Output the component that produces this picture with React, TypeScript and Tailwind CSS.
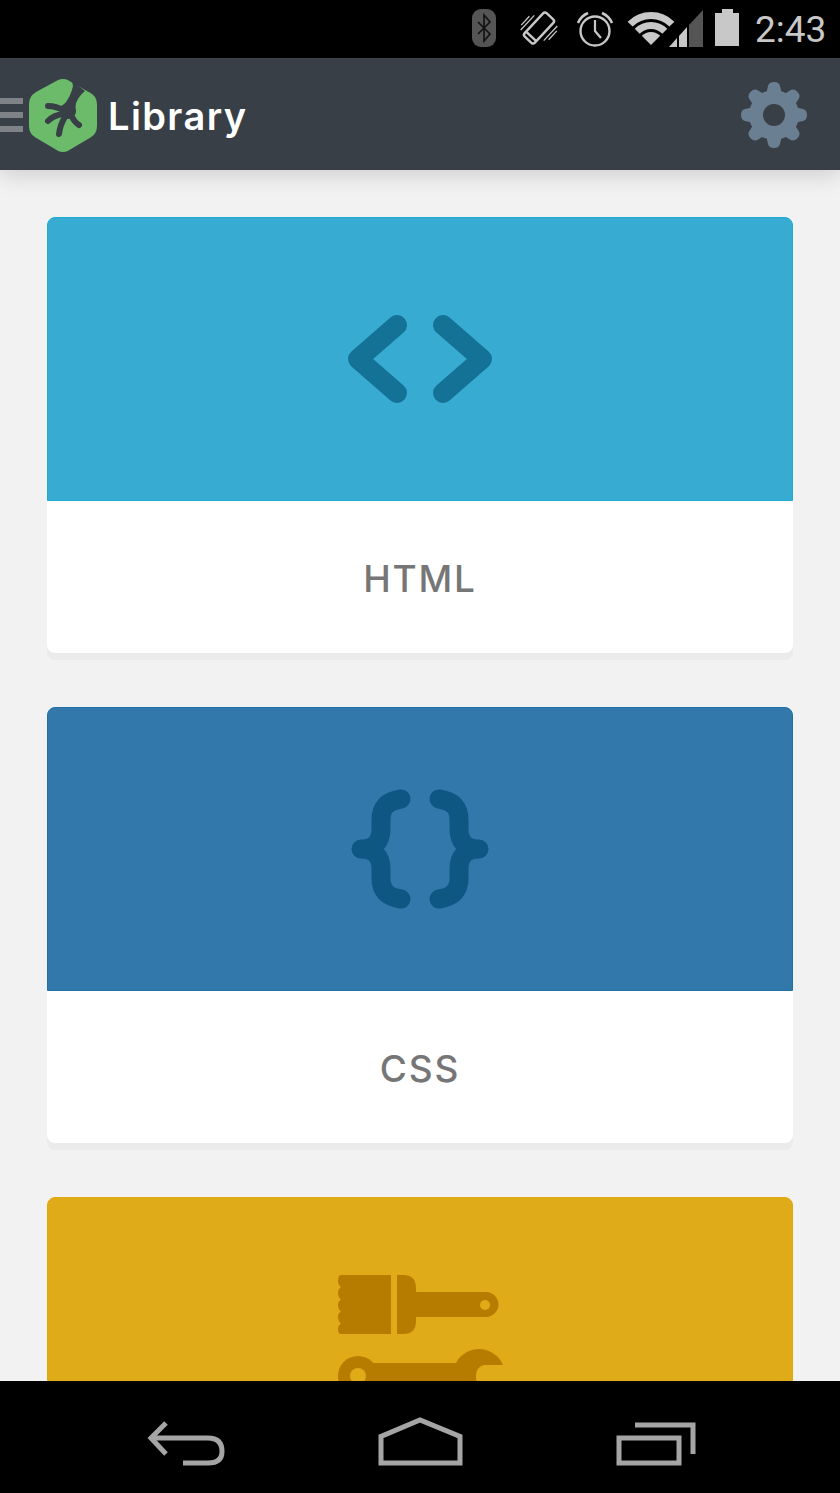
import type { ReactNode } from 'react';

function StatusIcons() {
  return (
    <svg width="280" height="58" viewBox="465 0 280 58" fill="none">
      {/* bluetooth */}
      <rect x="472" y="9" width="24" height="38" rx="9" fill="#555555" />
      <path d="M478 22 L490 34 L484 41 V15 L490 22 L478 34" stroke="#111111" strokeWidth="1.6" />
      {/* vibrate */}
      <g transform="rotate(43 539 28)" stroke="#c8c8c8">
        <rect x="532" y="12" width="14" height="32" rx="2.5" strokeWidth="2.4" />
        <path d="M532 39.5 H546" strokeWidth="2.5" />
        <path d="M527 22 V42 M524 26 V38 M551 14 V34 M554 18 V30" strokeWidth="1.3" />
      </g>
      {/* alarm */}
      <circle cx="595" cy="31" r="14.5" stroke="#c8c8c8" strokeWidth="2.4" />
      <path d="M595 20 V31 L601 38" stroke="#c8c8c8" strokeWidth="2.2" />
      <path d="M578 23 Q581 16 588 13 M612 23 Q609 16 602 13" stroke="#c8c8c8" strokeWidth="2.6" />
      {/* wifi */}
      <path d="M651 45 L641.8 35.8 A13 13 0 0 1 660.2 35.8 Z" fill="#c8c8c8" />
      <path d="M637.2 31.2 A19.5 19.5 0 0 1 664.8 31.2" stroke="#c8c8c8" strokeWidth="7" />
      <path d="M630.1 24.1 A29.5 29.5 0 0 1 671.9 24.1" stroke="#c8c8c8" strokeWidth="7" />
      {/* signal */}
      <polygon points="669,47 677,38 677,47" fill="#c8c8c8" />
      <polygon points="679,36 687,27 687,47 679,47" fill="#c8c8c8" />
      <polygon points="689,25 703,10 703,47 689,47" fill="#555555" />
      {/* battery */}
      <path d="M722 9 H733 V13 H739 V46 H715 V13 H722 Z" fill="#c8c8c8" />
    </svg>
  );
}

function Logo() {
  return (
    <svg width="72" height="84" viewBox="27 72 72 84" fill="none">
      <path d="M59 82 Q63 80 67 82 L88 94 Q94 97 94 103 V125 Q94 131 89 134 L67 147 Q63 149 59 147 L37 134 Q32 131 32 125 V103 Q32 97 37 94 Z" fill="#6bbb6b" stroke="#6bbb6b" strokeWidth="6" strokeLinejoin="round" />
      {/* foot */}
      <path d="M72 80 L73 85 Q71 96 62 106 L76 112 Q73 100 85 90 Z" fill="#383f47" />
      <circle cx="68" cy="110" r="8" fill="#383f47" />
      <g stroke="#383f47" strokeLinecap="round" strokeWidth="6">
        <path d="M65 110 Q56 105 48 105" />
        <path d="M63 113 Q54 114 48 120" />
        <path d="M65 116 Q60 124 59 133" />
        <path d="M71 113 Q73 120 79 124" />
      </g>
    </svg>
  );
}

function Gear() {
  const teeth = [0, 45, 90, 135, 180, 225, 270, 315];
  return (
    <svg width="70" height="70" viewBox="739 79 70 70">
      <circle cx="774" cy="114" r="25" fill="#6b7f93" />
      {teeth.map(a => (
        <path key={a} d="M764 103 L768 85 Q769 81 774 81 Q779 81 780 85 L784 103 Z" fill="#6b7f93" transform={`rotate(${a} 774 114)`} />
      ))}
      <circle cx="774" cy="114" r="11" fill="#383f47" />
    </svg>
  );
}

function CodeIcon() {
  return (
    <svg width="160" height="100" viewBox="340 309 160 100" fill="none" stroke="#147296" strokeWidth="20" strokeLinecap="round" strokeLinejoin="round">
      <path d="M397 325 L358 359 L397 393" />
      <path d="M443 325 L482 359 L443 393" />
    </svg>
  );
}

function BracesIcon() {
  return (
    <svg width="160" height="130" viewBox="340 784 160 130" fill="none" stroke="#0f5783" strokeWidth="19" strokeLinecap="round" strokeLinejoin="round">
      <path d="M401 799 C388 801 381 807 381 820 V829 C381 842 374 849 361 849 C374 849 381 856 381 869 V878 C381 891 388 897 401 899" />
      <path d="M439 799 C452 801 459 807 459 820 V829 C459 842 466 849 479 849 C466 849 459 856 459 869 V878 C459 891 452 897 439 899" />
    </svg>
  );
}

function ToolsIcon() {
  return (
    <svg width="180" height="140" viewBox="330 1269 180 140" className="shrink-0">
      <path d="M341 1275 H391 V1334 H341 Q338 1334 338 1329 Q338 1325 341 1323.5 Q338 1321 338 1317 Q338 1313 341 1311.5 Q338 1309 338 1305 Q338 1301 341 1299.5 Q338 1297 338 1293 Q338 1289 341 1287 Q338 1285 338 1281 Q338 1275 341 1275 Z" fill="#b67c00" />
      <path d="M397 1275 H403 Q416 1275 416 1288 V1292 H486 A12.5 12.5 0 0 1 486 1317 H416 V1321 Q416 1334 403 1334 H397 Z" fill="#b67c00" />
      <circle cx="485" cy="1305" r="5" fill="#dfab18" />
      <rect x="358" y="1363" width="120" height="26" fill="#b67c00" />
      <circle cx="358" cy="1376" r="20" fill="#b67c00" />
      <circle cx="358" cy="1376" r="8" fill="#dfab18" />
      <circle cx="479" cy="1375" r="26" fill="#b67c00" />
      <path d="M510 1365 H484 Q476 1367 476 1376 Q476 1385 484 1389 H510 Z" fill="#dfab18" />
    </svg>
  );
}

function NavIcons() {
  return (
    <svg width="570" height="112" viewBox="140 1381 570 112" fill="none" stroke="#a5a5a5" strokeWidth="5">
      <path d="M166 1423 L151 1438 L166 1454" />
      <path d="M151 1438 H208 Q222 1438 222 1451.500 Q222 1463 208 1463 H183" />
      <path d="M381 1463 V1436.500 L420 1420 L460 1436.500 V1463 Z" strokeLinejoin="miter" />
      <rect x="619" y="1438" width="60" height="25" />
      <path d="M635 1425 H693 V1454" />
    </svg>
  );
}

function Card({ title, top, border, icon, last }: { title: string; top: string; border: string; icon: ReactNode; last?: boolean }) {
  return (
    <div className={`w-[746px] shrink-0 rounded-lg bg-white shadow-[0_7px_0_#ebebeb] ${last ? '' : 'mb-[54px]'}`}>
      <div className={`h-[284px] rounded-t-lg border ${top} ${border} flex items-center justify-center overflow-hidden`}>
        {icon}
      </div>
      <div className="h-[152px] flex items-center justify-center pt-[3px] text-[37px] font-medium tracking-[1.8px] text-[#767676] [font-family:Inter,sans-serif]">
        {title}
      </div>
    </div>
  );
}

export default function App() {
  return (
    <div className="w-[840px] h-[1493px] flex flex-col overflow-hidden bg-black">
      {/* status bar */}
      <div className="h-[58px] shrink-0 flex items-center justify-end pr-[15px] gap-[10px] bg-black">
        <StatusIcons />
        <span className="w-[70px] text-right text-[37px] font-normal text-[#c8c8c8] leading-none [font-family:Roboto,sans-serif]">2:43</span>
      </div>

      {/* action bar */}
      <div className="relative z-10 h-[112px] shrink-0 flex items-center justify-between bg-[#383f47] pr-[31px] border-t border-[#3f464e] border-b-[#62676c] shadow-[0_4px_22px_rgba(0,0,0,0.16)]">
        <div className="flex items-center">
          <div className="w-[23px] flex flex-col gap-[8px]">
            <div className="h-[6px] bg-[#7f8387]" />
            <div className="h-[6px] bg-[#7f8387]" />
            <div className="h-[6px] bg-[#7f8387]" />
          </div>
          <div className="ml-[4px]"><Logo /></div>
          <span className="ml-[9px] pt-[3px] text-[38px] font-semibold tracking-[1.4px] text-white leading-none [font-family:Inter,sans-serif]">Library</span>
        </div>
        <Gear />
      </div>

      {/* cards */}
      <div className="flex-1 min-h-0 overflow-hidden flex flex-col items-center pt-[47px] bg-[#f2f2f2]">
        <Card title="HTML" top="bg-[#38abd2]" border="border-[#1dabd4]" icon={<CodeIcon />} />
        <Card title="CSS" top="bg-[#3278ab]" border="border-[#1f70a8]" icon={<BracesIcon />} />
        <Card title="" top="bg-[#dfab18]" border="border-[#dfa90f]" icon={<ToolsIcon />} last />
      </div>

      {/* nav bar */}
      <div className="h-[112px] shrink-0 flex items-center justify-start pl-[140px] bg-black">
        <NavIcons />
      </div>
    </div>
  );
}
